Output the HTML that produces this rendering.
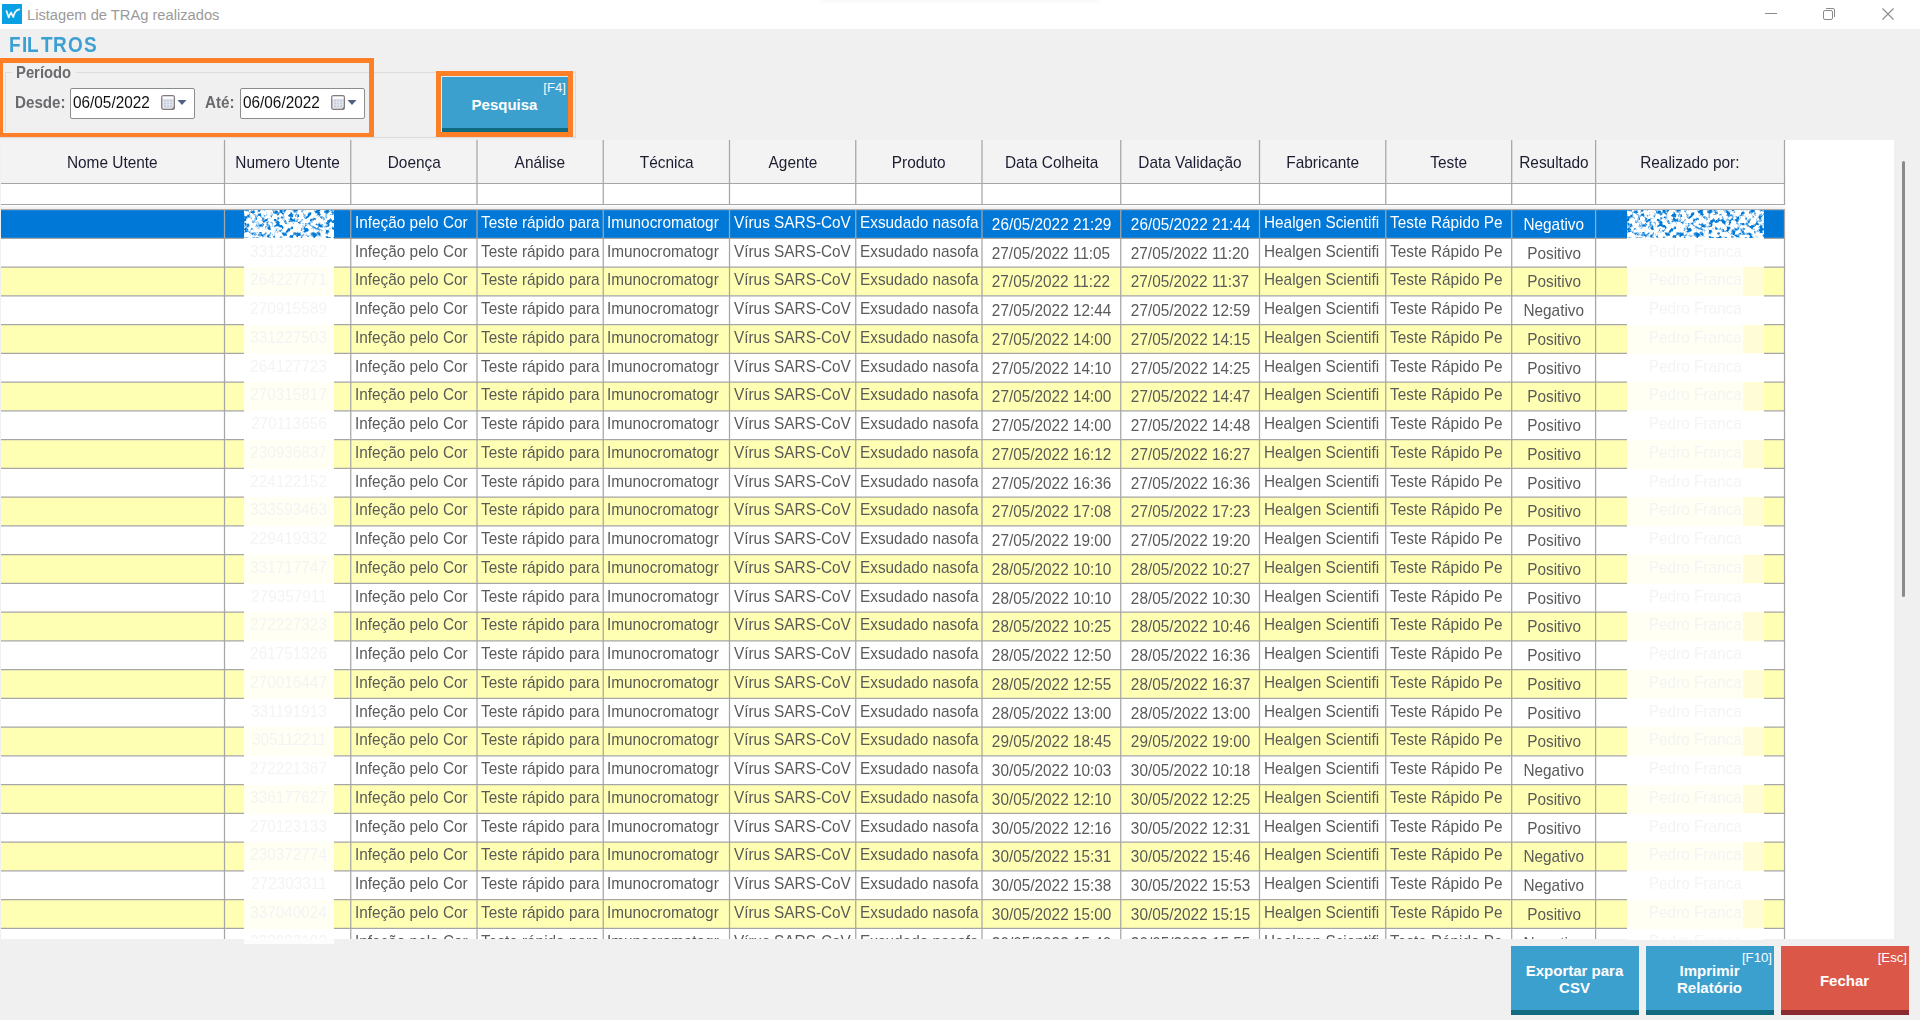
<!DOCTYPE html><html><head><meta charset="utf-8"><title>Listagem de TRAg realizados</title><style>
*{box-sizing:border-box;margin:0;padding:0}
html,body{width:1920px;height:1020px;overflow:hidden;background:#f0f0f0;font-family:"Liberation Sans", sans-serif;}
.a{position:absolute}
.t{position:absolute;white-space:pre;line-height:20px;height:20px}
.vl{position:absolute;width:1px;background:#a0a0a0}
.hl{position:absolute;height:1px;background:#a0a0a0}
.sl{display:inline-block;transform-origin:0 50%}
.sc{display:inline-block;transform-origin:50% 50%}
</style></head><body><div class="a" style="left:0;top:0;width:1920px;height:29px;background:#fff"></div><div class="a" style="left:2px;top:4px;width:20px;height:20px;background:#09a0e4"></div><svg class="a" style="left:2px;top:4px" width="20" height="20" viewBox="0 0 20 20"><path d="M4.5 7 Q5.6 10.5 6.8 13.4 Q7.9 10.2 9.1 8.4 Q10.1 11 11.3 13 Q12.6 6.2 17.3 5.4" fill="none" stroke="#f2f8fc" stroke-width="1.7" stroke-linejoin="round" stroke-linecap="round"/></svg><div class="t" style="left:27px;top:5px;font-size:14.7px;color:#9a9a9a">Listagem de TRAg realizados</div><div class="a" style="left:820px;top:-6px;width:280px;height:6px;box-shadow:0 0 6px rgba(0,0,0,0.06)"></div><div class="a" style="left:1765px;top:13px;width:12px;height:1px;background:#8a8a8a"></div><svg class="a" style="left:1820px;top:5px" width="18" height="18" viewBox="0 0 18 18"><rect x="3.5" y="5.5" width="9" height="9" rx="1.5" fill="none" stroke="#8a8a8a" stroke-width="1"/><path d="M6 3.5 H13 A1.5 1.5 0 0 1 14.5 5 V12" fill="none" stroke="#8a8a8a" stroke-width="1"/></svg><svg class="a" style="left:1879px;top:5px" width="18" height="18" viewBox="0 0 18 18"><path d="M3.5 3.5 L14.5 14.5 M14.5 3.5 L3.5 14.5" stroke="#8a8a8a" stroke-width="1.1"/></svg><div class="t" style="left:8.9px;top:31.5px;font-size:21.6px;font-weight:bold;color:#3da0d2;line-height:26px;height:26px"><span class="sl" style="transform:scaleX(0.88)">F</span></div><div class="t" style="left:21.6px;top:31.5px;font-size:21.6px;font-weight:bold;color:#3da0d2;line-height:26px;height:26px"><span class="sl" style="transform:scaleX(0.88)">I</span></div><div class="t" style="left:27.2px;top:31.5px;font-size:21.6px;font-weight:bold;color:#3da0d2;line-height:26px;height:26px"><span class="sl" style="transform:scaleX(0.88)">L</span></div><div class="t" style="left:40.9px;top:31.5px;font-size:21.6px;font-weight:bold;color:#3da0d2;line-height:26px;height:26px"><span class="sl" style="transform:scaleX(0.88)">T</span></div><div class="t" style="left:53.0px;top:31.5px;font-size:21.6px;font-weight:bold;color:#3da0d2;line-height:26px;height:26px"><span class="sl" style="transform:scaleX(0.88)">R</span></div><div class="t" style="left:67.7px;top:31.5px;font-size:21.6px;font-weight:bold;color:#3da0d2;line-height:26px;height:26px"><span class="sl" style="transform:scaleX(0.88)">O</span></div><div class="t" style="left:84.1px;top:31.5px;font-size:21.6px;font-weight:bold;color:#3da0d2;line-height:26px;height:26px"><span class="sl" style="transform:scaleX(0.88)">S</span></div><div class="a" style="left:6px;top:72px;width:570px;height:1px;background:#dcdcdc"></div><div class="a" style="left:0;top:137px;width:576px;height:1px;background:#dcdcdc"></div><div class="a" style="left:5px;top:72px;width:1px;height:60px;background:#dcdcdc"></div><div class="a" style="left:575px;top:72px;width:1px;height:65px;background:#dcdcdc"></div><div class="a" style="left:12px;top:64px;width:64px;height:16px;background:#f0f0f0"></div><div class="t" style="left:16px;top:61.5px;font-size:16.2px;font-weight:bold;color:#6a6a6e"><span class="sl" style="transform:scaleX(0.915)">Período</span></div><div class="t" style="left:15px;top:92px;font-size:16.4px;font-weight:bold;color:#6a6a6e"><span class="sl" style="transform:scaleX(0.925)">Desde:</span></div><div class="t" style="left:205px;top:92px;font-size:16.4px;font-weight:bold;color:#6a6a6e"><span class="sl" style="transform:scaleX(0.925)">Até:</span></div><div class="a" style="left:70px;top:88px;width:125px;height:31px;background:#fff;border:1px solid #8c8c8c;border-radius:2px"></div><div class="t" style="left:73px;top:93px;font-size:16.6px;color:#111"><span class="sl" style="transform:scaleX(0.925)">06/05/2022</span></div><svg class="a" style="left:161px;top:95px" width="28" height="16" viewBox="0 0 28 16"><rect x="0.75" y="0.75" width="12.6" height="13.6" rx="1.6" fill="#e4e8f1" stroke="#857a7a" stroke-width="1.3"/><rect x="1.5" y="1.5" width="11" height="2.3" fill="#fbfcfe"/><rect x="3" y="4.6" width="8.2" height="7.8" fill="#c6ccd9"/><path d="M3 7.2 H11.2 M3 9.8 H11.2 M5.7 4.6 V12.4 M8.4 4.6 V12.4" stroke="#e8ebf2" stroke-width="0.9"/><path d="M10.2 14.4 L13.4 11.2 V13 Q13.4 14.4 12 14.4 Z" fill="#857a7a"/><path d="M16.5 5 L25.5 5 L21 10 Z" fill="#4d6186"/></svg><div class="a" style="left:240px;top:88px;width:125px;height:31px;background:#fff;border:1px solid #8c8c8c;border-radius:2px"></div><div class="t" style="left:243px;top:93px;font-size:16.6px;color:#111"><span class="sl" style="transform:scaleX(0.925)">06/06/2022</span></div><svg class="a" style="left:331px;top:95px" width="28" height="16" viewBox="0 0 28 16"><rect x="0.75" y="0.75" width="12.6" height="13.6" rx="1.6" fill="#e4e8f1" stroke="#857a7a" stroke-width="1.3"/><rect x="1.5" y="1.5" width="11" height="2.3" fill="#fbfcfe"/><rect x="3" y="4.6" width="8.2" height="7.8" fill="#c6ccd9"/><path d="M3 7.2 H11.2 M3 9.8 H11.2 M5.7 4.6 V12.4 M8.4 4.6 V12.4" stroke="#e8ebf2" stroke-width="0.9"/><path d="M10.2 14.4 L13.4 11.2 V13 Q13.4 14.4 12 14.4 Z" fill="#857a7a"/><path d="M16.5 5 L25.5 5 L21 10 Z" fill="#4d6186"/></svg><div class="a" style="left:0;top:58px;width:374px;height:79px;border:5px solid #ff7f27;border-left-width:3px;border-bottom-width:4.5px"></div><div class="a" style="left:441px;top:76px;width:127px;height:56px;background:#3ca0cf;border-left:1px solid #e6f3fa;border-top:1px solid #d8edf7"></div><div class="a" style="left:442px;top:128px;width:126px;height:4px;background:#106b80"></div><div class="t" style="left:441px;width:127px;text-align:center;top:95px;font-size:15px;font-weight:bold;color:#fff">Pesquisa</div><div class="t" style="left:515px;width:51px;text-align:right;top:78px;font-size:13.2px;color:#f4f8fb">[F4]</div><div class="a" style="left:436px;top:71px;width:137px;height:66px;border:5px solid #ff7f27"></div><div class="a" style="left:1px;top:140px;width:1893px;height:799px;background:#fff;overflow:hidden"><svg class="a" style="left:-1px;top:-140px" width="1900" height="939" viewBox="0 0 1900 939"><rect x="1" y="140" width="1783.5" height="43.3" fill="#f3f3f3"/><defs><linearGradient id="gg" x1="0" y1="0" x2="0" y2="1"><stop offset="0" stop-color="#ffffff"/><stop offset="1" stop-color="#ececec"/></linearGradient></defs><rect x="1" y="204.9" width="1783.5" height="4.6" fill="url(#gg)"/><rect x="1" y="209.5" width="1783.5" height="28.75" fill="#0078d7"/><rect x="1" y="238.25" width="1783.5" height="28.75" fill="#ffffff"/><rect x="1" y="267.0" width="1783.5" height="28.75" fill="#ffffb4"/><rect x="1" y="295.75" width="1783.5" height="28.75" fill="#ffffff"/><rect x="1" y="324.5" width="1783.5" height="28.75" fill="#ffffb4"/><rect x="1" y="353.25" width="1783.5" height="28.75" fill="#ffffff"/><rect x="1" y="382.0" width="1783.5" height="28.75" fill="#ffffb4"/><rect x="1" y="410.75" width="1783.5" height="28.75" fill="#ffffff"/><rect x="1" y="439.5" width="1783.5" height="28.75" fill="#ffffb4"/><rect x="1" y="468.25" width="1783.5" height="28.75" fill="#ffffff"/><rect x="1" y="497.0" width="1783.5" height="28.75" fill="#ffffb4"/><rect x="1" y="525.75" width="1783.5" height="28.75" fill="#ffffff"/><rect x="1" y="554.5" width="1783.5" height="28.75" fill="#ffffb4"/><rect x="1" y="583.25" width="1783.5" height="28.75" fill="#ffffff"/><rect x="1" y="612.0" width="1783.5" height="28.75" fill="#ffffb4"/><rect x="1" y="640.75" width="1783.5" height="28.75" fill="#ffffff"/><rect x="1" y="669.5" width="1783.5" height="28.75" fill="#ffffb4"/><rect x="1" y="698.25" width="1783.5" height="28.75" fill="#ffffff"/><rect x="1" y="727.0" width="1783.5" height="28.75" fill="#ffffb4"/><rect x="1" y="755.75" width="1783.5" height="28.75" fill="#ffffff"/><rect x="1" y="784.5" width="1783.5" height="28.75" fill="#ffffb4"/><rect x="1" y="813.25" width="1783.5" height="28.75" fill="#ffffff"/><rect x="1" y="842.0" width="1783.5" height="28.75" fill="#ffffb4"/><rect x="1" y="870.75" width="1783.5" height="28.75" fill="#ffffff"/><rect x="1" y="899.5" width="1783.5" height="28.75" fill="#ffffb4"/><rect x="1" y="928.25" width="1783.5" height="28.75" fill="#ffffff"/><line x1="1" x2="1785.1" y1="183.5" y2="183.5" stroke="#a6a6a6" stroke-width="1.2"/><line x1="1" x2="1785.1" y1="204.5" y2="204.5" stroke="#a6a6a6" stroke-width="1.2"/><line x1="1" x2="1785.1" y1="209.7" y2="209.7" stroke="#b9aea6" stroke-width="1"/><line x1="1" x2="1785.1" y1="238.4" y2="238.4" stroke="#a6a6a6" stroke-width="1.25"/><line x1="1" x2="1785.1" y1="267.15" y2="267.15" stroke="#a6a6a6" stroke-width="1.25"/><line x1="1" x2="1785.1" y1="295.9" y2="295.9" stroke="#a6a6a6" stroke-width="1.25"/><line x1="1" x2="1785.1" y1="324.65" y2="324.65" stroke="#a6a6a6" stroke-width="1.25"/><line x1="1" x2="1785.1" y1="353.4" y2="353.4" stroke="#a6a6a6" stroke-width="1.25"/><line x1="1" x2="1785.1" y1="382.15" y2="382.15" stroke="#a6a6a6" stroke-width="1.25"/><line x1="1" x2="1785.1" y1="410.9" y2="410.9" stroke="#a6a6a6" stroke-width="1.25"/><line x1="1" x2="1785.1" y1="439.65" y2="439.65" stroke="#a6a6a6" stroke-width="1.25"/><line x1="1" x2="1785.1" y1="468.4" y2="468.4" stroke="#a6a6a6" stroke-width="1.25"/><line x1="1" x2="1785.1" y1="497.15" y2="497.15" stroke="#a6a6a6" stroke-width="1.25"/><line x1="1" x2="1785.1" y1="525.9" y2="525.9" stroke="#a6a6a6" stroke-width="1.25"/><line x1="1" x2="1785.1" y1="554.65" y2="554.65" stroke="#a6a6a6" stroke-width="1.25"/><line x1="1" x2="1785.1" y1="583.4" y2="583.4" stroke="#a6a6a6" stroke-width="1.25"/><line x1="1" x2="1785.1" y1="612.15" y2="612.15" stroke="#a6a6a6" stroke-width="1.25"/><line x1="1" x2="1785.1" y1="640.9" y2="640.9" stroke="#a6a6a6" stroke-width="1.25"/><line x1="1" x2="1785.1" y1="669.65" y2="669.65" stroke="#a6a6a6" stroke-width="1.25"/><line x1="1" x2="1785.1" y1="698.4" y2="698.4" stroke="#a6a6a6" stroke-width="1.25"/><line x1="1" x2="1785.1" y1="727.15" y2="727.15" stroke="#a6a6a6" stroke-width="1.25"/><line x1="1" x2="1785.1" y1="755.9" y2="755.9" stroke="#a6a6a6" stroke-width="1.25"/><line x1="1" x2="1785.1" y1="784.65" y2="784.65" stroke="#a6a6a6" stroke-width="1.25"/><line x1="1" x2="1785.1" y1="813.4" y2="813.4" stroke="#a6a6a6" stroke-width="1.25"/><line x1="1" x2="1785.1" y1="842.15" y2="842.15" stroke="#a6a6a6" stroke-width="1.25"/><line x1="1" x2="1785.1" y1="870.9" y2="870.9" stroke="#a6a6a6" stroke-width="1.25"/><line x1="1" x2="1785.1" y1="899.65" y2="899.65" stroke="#a6a6a6" stroke-width="1.25"/><line x1="1" x2="1785.1" y1="928.4" y2="928.4" stroke="#a6a6a6" stroke-width="1.25"/><line x1="1" x2="1785.1" y1="957.15" y2="957.15" stroke="#a6a6a6" stroke-width="1.25"/><line x1="224.5" x2="224.5" y1="140" y2="204.8" stroke="#a6a6a6" stroke-width="1.25"/><line x1="224.5" x2="224.5" y1="209.6" y2="939" stroke="#a6a6a6" stroke-width="1.25"/><line x1="350.75" x2="350.75" y1="140" y2="204.8" stroke="#a6a6a6" stroke-width="1.25"/><line x1="350.75" x2="350.75" y1="209.6" y2="939" stroke="#a6a6a6" stroke-width="1.25"/><line x1="477" x2="477" y1="140" y2="204.8" stroke="#a6a6a6" stroke-width="1.25"/><line x1="477" x2="477" y1="209.6" y2="939" stroke="#a6a6a6" stroke-width="1.25"/><line x1="603.25" x2="603.25" y1="140" y2="204.8" stroke="#a6a6a6" stroke-width="1.25"/><line x1="603.25" x2="603.25" y1="209.6" y2="939" stroke="#a6a6a6" stroke-width="1.25"/><line x1="729.5" x2="729.5" y1="140" y2="204.8" stroke="#a6a6a6" stroke-width="1.25"/><line x1="729.5" x2="729.5" y1="209.6" y2="939" stroke="#a6a6a6" stroke-width="1.25"/><line x1="855.75" x2="855.75" y1="140" y2="204.8" stroke="#a6a6a6" stroke-width="1.25"/><line x1="855.75" x2="855.75" y1="209.6" y2="939" stroke="#a6a6a6" stroke-width="1.25"/><line x1="982" x2="982" y1="140" y2="204.8" stroke="#a6a6a6" stroke-width="1.25"/><line x1="982" x2="982" y1="209.6" y2="939" stroke="#a6a6a6" stroke-width="1.25"/><line x1="1120.75" x2="1120.75" y1="140" y2="204.8" stroke="#a6a6a6" stroke-width="1.25"/><line x1="1120.75" x2="1120.75" y1="209.6" y2="939" stroke="#a6a6a6" stroke-width="1.25"/><line x1="1259.5" x2="1259.5" y1="140" y2="204.8" stroke="#a6a6a6" stroke-width="1.25"/><line x1="1259.5" x2="1259.5" y1="209.6" y2="939" stroke="#a6a6a6" stroke-width="1.25"/><line x1="1385.75" x2="1385.75" y1="140" y2="204.8" stroke="#a6a6a6" stroke-width="1.25"/><line x1="1385.75" x2="1385.75" y1="209.6" y2="939" stroke="#a6a6a6" stroke-width="1.25"/><line x1="1511.7" x2="1511.7" y1="140" y2="204.8" stroke="#a6a6a6" stroke-width="1.25"/><line x1="1511.7" x2="1511.7" y1="209.6" y2="939" stroke="#a6a6a6" stroke-width="1.25"/><line x1="1595.6" x2="1595.6" y1="140" y2="204.8" stroke="#a6a6a6" stroke-width="1.25"/><line x1="1595.6" x2="1595.6" y1="209.6" y2="939" stroke="#a6a6a6" stroke-width="1.25"/><line x1="1784.5" x2="1784.5" y1="140" y2="204.8" stroke="#a6a6a6" stroke-width="1.25"/><line x1="1784.5" x2="1784.5" y1="209.6" y2="939" stroke="#a6a6a6" stroke-width="1.25"/></svg><div class="t" style="left:0px;width:223.5px;text-align:center;top:12px;font-size:16.4px;color:#1c1c30"><span class="sc" style="transform:scaleX(0.94)">Nome Utente</span></div><div class="t" style="left:223.5px;width:126.25px;text-align:center;top:12px;font-size:16.4px;color:#1c1c30"><span class="sc" style="transform:scaleX(0.94)">Numero Utente</span></div><div class="t" style="left:349.75px;width:126.25px;text-align:center;top:12px;font-size:16.4px;color:#1c1c30"><span class="sc" style="transform:scaleX(0.94)">Doença</span></div><div class="t" style="left:476px;width:126.25px;text-align:center;top:12px;font-size:16.4px;color:#1c1c30"><span class="sc" style="transform:scaleX(0.94)">Análise</span></div><div class="t" style="left:602.25px;width:126.25px;text-align:center;top:12px;font-size:16.4px;color:#1c1c30"><span class="sc" style="transform:scaleX(0.94)">Técnica</span></div><div class="t" style="left:728.5px;width:126.25px;text-align:center;top:12px;font-size:16.4px;color:#1c1c30"><span class="sc" style="transform:scaleX(0.94)">Agente</span></div><div class="t" style="left:854.75px;width:126.25px;text-align:center;top:12px;font-size:16.4px;color:#1c1c30"><span class="sc" style="transform:scaleX(0.94)">Produto</span></div><div class="t" style="left:981px;width:138.75px;text-align:center;top:12px;font-size:16.4px;color:#1c1c30"><span class="sc" style="transform:scaleX(0.94)">Data Colheita</span></div><div class="t" style="left:1119.75px;width:138.75px;text-align:center;top:12px;font-size:16.4px;color:#1c1c30"><span class="sc" style="transform:scaleX(0.94)">Data Validação</span></div><div class="t" style="left:1258.5px;width:126.25px;text-align:center;top:12px;font-size:16.4px;color:#1c1c30"><span class="sc" style="transform:scaleX(0.94)">Fabricante</span></div><div class="t" style="left:1384.75px;width:125.95000000000005px;text-align:center;top:12px;font-size:16.4px;color:#1c1c30"><span class="sc" style="transform:scaleX(0.94)">Teste</span></div><div class="t" style="left:1510.7px;width:83.89999999999986px;text-align:center;top:12px;font-size:16.4px;color:#1c1c30"><span class="sc" style="transform:scaleX(0.94)">Resultado</span></div><div class="t" style="left:1594.6px;width:188.9000000000001px;text-align:center;top:12px;font-size:16.4px;color:#1c1c30"><span class="sc" style="transform:scaleX(0.94)">Realizado por:</span></div><div class="t" style="left:353.75px;top:72.75px;font-size:16.6px;color:#fff"><span class="sl" style="transform:scaleX(0.925)">Infeção pelo Cor</span></div><div class="t" style="left:480px;top:72.75px;font-size:16.6px;color:#fff"><span class="sl" style="transform:scaleX(0.925)">Teste rápido para</span></div><div class="t" style="left:606.25px;top:72.75px;font-size:16.6px;color:#fff"><span class="sl" style="transform:scaleX(0.925)">Imunocromatogr</span></div><div class="t" style="left:732.5px;top:72.75px;font-size:16.6px;color:#fff"><span class="sl" style="transform:scaleX(0.925)">Vírus SARS-CoV</span></div><div class="t" style="left:858.75px;top:72.75px;font-size:16.6px;color:#fff"><span class="sl" style="transform:scaleX(0.925)">Exsudado nasofa</span></div><div class="t" style="left:1262.5px;top:72.75px;font-size:16.6px;color:#fff"><span class="sl" style="transform:scaleX(0.925)">Healgen Scientifi</span></div><div class="t" style="left:1388.75px;top:72.75px;font-size:16.6px;color:#fff"><span class="sl" style="transform:scaleX(0.925)">Teste Rápido Pe</span></div><div class="t" style="left:981px;width:138.75px;text-align:center;top:74.75px;font-size:16.6px;color:#fff"><span class="sc" style="transform:scaleX(0.925)">26/05/2022 21:29</span></div><div class="t" style="left:1119.75px;width:138.75px;text-align:center;top:74.75px;font-size:16.6px;color:#fff"><span class="sc" style="transform:scaleX(0.925)">26/05/2022 21:44</span></div><div class="t" style="left:1510.7px;width:83.89999999999986px;text-align:center;top:74.75px;font-size:16.6px;color:#fff"><span class="sc" style="transform:scaleX(0.925)">Negativo</span></div><div class="t" style="left:353.75px;top:101.5px;font-size:16.6px;color:#5a5a5a"><span class="sl" style="transform:scaleX(0.925)">Infeção pelo Cor</span></div><div class="t" style="left:480px;top:101.5px;font-size:16.6px;color:#5a5a5a"><span class="sl" style="transform:scaleX(0.925)">Teste rápido para</span></div><div class="t" style="left:606.25px;top:101.5px;font-size:16.6px;color:#5a5a5a"><span class="sl" style="transform:scaleX(0.925)">Imunocromatogr</span></div><div class="t" style="left:732.5px;top:101.5px;font-size:16.6px;color:#5a5a5a"><span class="sl" style="transform:scaleX(0.925)">Vírus SARS-CoV</span></div><div class="t" style="left:858.75px;top:101.5px;font-size:16.6px;color:#5a5a5a"><span class="sl" style="transform:scaleX(0.925)">Exsudado nasofa</span></div><div class="t" style="left:1262.5px;top:101.5px;font-size:16.6px;color:#5a5a5a"><span class="sl" style="transform:scaleX(0.925)">Healgen Scientifi</span></div><div class="t" style="left:1388.75px;top:101.5px;font-size:16.6px;color:#5a5a5a"><span class="sl" style="transform:scaleX(0.925)">Teste Rápido Pe</span></div><div class="t" style="left:981px;width:138.75px;text-align:center;top:103.5px;font-size:16.6px;color:#5a5a5a"><span class="sc" style="transform:scaleX(0.925)">27/05/2022 11:05</span></div><div class="t" style="left:1119.75px;width:138.75px;text-align:center;top:103.5px;font-size:16.6px;color:#5a5a5a"><span class="sc" style="transform:scaleX(0.925)">27/05/2022 11:20</span></div><div class="t" style="left:1510.7px;width:83.89999999999986px;text-align:center;top:103.5px;font-size:16.6px;color:#5a5a5a"><span class="sc" style="transform:scaleX(0.925)">Positivo</span></div><div class="t" style="left:353.75px;top:130.25px;font-size:16.6px;color:#5a5a5a"><span class="sl" style="transform:scaleX(0.925)">Infeção pelo Cor</span></div><div class="t" style="left:480px;top:130.25px;font-size:16.6px;color:#5a5a5a"><span class="sl" style="transform:scaleX(0.925)">Teste rápido para</span></div><div class="t" style="left:606.25px;top:130.25px;font-size:16.6px;color:#5a5a5a"><span class="sl" style="transform:scaleX(0.925)">Imunocromatogr</span></div><div class="t" style="left:732.5px;top:130.25px;font-size:16.6px;color:#5a5a5a"><span class="sl" style="transform:scaleX(0.925)">Vírus SARS-CoV</span></div><div class="t" style="left:858.75px;top:130.25px;font-size:16.6px;color:#5a5a5a"><span class="sl" style="transform:scaleX(0.925)">Exsudado nasofa</span></div><div class="t" style="left:1262.5px;top:130.25px;font-size:16.6px;color:#5a5a5a"><span class="sl" style="transform:scaleX(0.925)">Healgen Scientifi</span></div><div class="t" style="left:1388.75px;top:130.25px;font-size:16.6px;color:#5a5a5a"><span class="sl" style="transform:scaleX(0.925)">Teste Rápido Pe</span></div><div class="t" style="left:981px;width:138.75px;text-align:center;top:132.25px;font-size:16.6px;color:#5a5a5a"><span class="sc" style="transform:scaleX(0.925)">27/05/2022 11:22</span></div><div class="t" style="left:1119.75px;width:138.75px;text-align:center;top:132.25px;font-size:16.6px;color:#5a5a5a"><span class="sc" style="transform:scaleX(0.925)">27/05/2022 11:37</span></div><div class="t" style="left:1510.7px;width:83.89999999999986px;text-align:center;top:132.25px;font-size:16.6px;color:#5a5a5a"><span class="sc" style="transform:scaleX(0.925)">Positivo</span></div><div class="t" style="left:353.75px;top:159.0px;font-size:16.6px;color:#5a5a5a"><span class="sl" style="transform:scaleX(0.925)">Infeção pelo Cor</span></div><div class="t" style="left:480px;top:159.0px;font-size:16.6px;color:#5a5a5a"><span class="sl" style="transform:scaleX(0.925)">Teste rápido para</span></div><div class="t" style="left:606.25px;top:159.0px;font-size:16.6px;color:#5a5a5a"><span class="sl" style="transform:scaleX(0.925)">Imunocromatogr</span></div><div class="t" style="left:732.5px;top:159.0px;font-size:16.6px;color:#5a5a5a"><span class="sl" style="transform:scaleX(0.925)">Vírus SARS-CoV</span></div><div class="t" style="left:858.75px;top:159.0px;font-size:16.6px;color:#5a5a5a"><span class="sl" style="transform:scaleX(0.925)">Exsudado nasofa</span></div><div class="t" style="left:1262.5px;top:159.0px;font-size:16.6px;color:#5a5a5a"><span class="sl" style="transform:scaleX(0.925)">Healgen Scientifi</span></div><div class="t" style="left:1388.75px;top:159.0px;font-size:16.6px;color:#5a5a5a"><span class="sl" style="transform:scaleX(0.925)">Teste Rápido Pe</span></div><div class="t" style="left:981px;width:138.75px;text-align:center;top:161.0px;font-size:16.6px;color:#5a5a5a"><span class="sc" style="transform:scaleX(0.925)">27/05/2022 12:44</span></div><div class="t" style="left:1119.75px;width:138.75px;text-align:center;top:161.0px;font-size:16.6px;color:#5a5a5a"><span class="sc" style="transform:scaleX(0.925)">27/05/2022 12:59</span></div><div class="t" style="left:1510.7px;width:83.89999999999986px;text-align:center;top:161.0px;font-size:16.6px;color:#5a5a5a"><span class="sc" style="transform:scaleX(0.925)">Negativo</span></div><div class="t" style="left:353.75px;top:187.75px;font-size:16.6px;color:#5a5a5a"><span class="sl" style="transform:scaleX(0.925)">Infeção pelo Cor</span></div><div class="t" style="left:480px;top:187.75px;font-size:16.6px;color:#5a5a5a"><span class="sl" style="transform:scaleX(0.925)">Teste rápido para</span></div><div class="t" style="left:606.25px;top:187.75px;font-size:16.6px;color:#5a5a5a"><span class="sl" style="transform:scaleX(0.925)">Imunocromatogr</span></div><div class="t" style="left:732.5px;top:187.75px;font-size:16.6px;color:#5a5a5a"><span class="sl" style="transform:scaleX(0.925)">Vírus SARS-CoV</span></div><div class="t" style="left:858.75px;top:187.75px;font-size:16.6px;color:#5a5a5a"><span class="sl" style="transform:scaleX(0.925)">Exsudado nasofa</span></div><div class="t" style="left:1262.5px;top:187.75px;font-size:16.6px;color:#5a5a5a"><span class="sl" style="transform:scaleX(0.925)">Healgen Scientifi</span></div><div class="t" style="left:1388.75px;top:187.75px;font-size:16.6px;color:#5a5a5a"><span class="sl" style="transform:scaleX(0.925)">Teste Rápido Pe</span></div><div class="t" style="left:981px;width:138.75px;text-align:center;top:189.75px;font-size:16.6px;color:#5a5a5a"><span class="sc" style="transform:scaleX(0.925)">27/05/2022 14:00</span></div><div class="t" style="left:1119.75px;width:138.75px;text-align:center;top:189.75px;font-size:16.6px;color:#5a5a5a"><span class="sc" style="transform:scaleX(0.925)">27/05/2022 14:15</span></div><div class="t" style="left:1510.7px;width:83.89999999999986px;text-align:center;top:189.75px;font-size:16.6px;color:#5a5a5a"><span class="sc" style="transform:scaleX(0.925)">Positivo</span></div><div class="t" style="left:353.75px;top:216.5px;font-size:16.6px;color:#5a5a5a"><span class="sl" style="transform:scaleX(0.925)">Infeção pelo Cor</span></div><div class="t" style="left:480px;top:216.5px;font-size:16.6px;color:#5a5a5a"><span class="sl" style="transform:scaleX(0.925)">Teste rápido para</span></div><div class="t" style="left:606.25px;top:216.5px;font-size:16.6px;color:#5a5a5a"><span class="sl" style="transform:scaleX(0.925)">Imunocromatogr</span></div><div class="t" style="left:732.5px;top:216.5px;font-size:16.6px;color:#5a5a5a"><span class="sl" style="transform:scaleX(0.925)">Vírus SARS-CoV</span></div><div class="t" style="left:858.75px;top:216.5px;font-size:16.6px;color:#5a5a5a"><span class="sl" style="transform:scaleX(0.925)">Exsudado nasofa</span></div><div class="t" style="left:1262.5px;top:216.5px;font-size:16.6px;color:#5a5a5a"><span class="sl" style="transform:scaleX(0.925)">Healgen Scientifi</span></div><div class="t" style="left:1388.75px;top:216.5px;font-size:16.6px;color:#5a5a5a"><span class="sl" style="transform:scaleX(0.925)">Teste Rápido Pe</span></div><div class="t" style="left:981px;width:138.75px;text-align:center;top:218.5px;font-size:16.6px;color:#5a5a5a"><span class="sc" style="transform:scaleX(0.925)">27/05/2022 14:10</span></div><div class="t" style="left:1119.75px;width:138.75px;text-align:center;top:218.5px;font-size:16.6px;color:#5a5a5a"><span class="sc" style="transform:scaleX(0.925)">27/05/2022 14:25</span></div><div class="t" style="left:1510.7px;width:83.89999999999986px;text-align:center;top:218.5px;font-size:16.6px;color:#5a5a5a"><span class="sc" style="transform:scaleX(0.925)">Positivo</span></div><div class="t" style="left:353.75px;top:245.25px;font-size:16.6px;color:#5a5a5a"><span class="sl" style="transform:scaleX(0.925)">Infeção pelo Cor</span></div><div class="t" style="left:480px;top:245.25px;font-size:16.6px;color:#5a5a5a"><span class="sl" style="transform:scaleX(0.925)">Teste rápido para</span></div><div class="t" style="left:606.25px;top:245.25px;font-size:16.6px;color:#5a5a5a"><span class="sl" style="transform:scaleX(0.925)">Imunocromatogr</span></div><div class="t" style="left:732.5px;top:245.25px;font-size:16.6px;color:#5a5a5a"><span class="sl" style="transform:scaleX(0.925)">Vírus SARS-CoV</span></div><div class="t" style="left:858.75px;top:245.25px;font-size:16.6px;color:#5a5a5a"><span class="sl" style="transform:scaleX(0.925)">Exsudado nasofa</span></div><div class="t" style="left:1262.5px;top:245.25px;font-size:16.6px;color:#5a5a5a"><span class="sl" style="transform:scaleX(0.925)">Healgen Scientifi</span></div><div class="t" style="left:1388.75px;top:245.25px;font-size:16.6px;color:#5a5a5a"><span class="sl" style="transform:scaleX(0.925)">Teste Rápido Pe</span></div><div class="t" style="left:981px;width:138.75px;text-align:center;top:247.25px;font-size:16.6px;color:#5a5a5a"><span class="sc" style="transform:scaleX(0.925)">27/05/2022 14:00</span></div><div class="t" style="left:1119.75px;width:138.75px;text-align:center;top:247.25px;font-size:16.6px;color:#5a5a5a"><span class="sc" style="transform:scaleX(0.925)">27/05/2022 14:47</span></div><div class="t" style="left:1510.7px;width:83.89999999999986px;text-align:center;top:247.25px;font-size:16.6px;color:#5a5a5a"><span class="sc" style="transform:scaleX(0.925)">Positivo</span></div><div class="t" style="left:353.75px;top:274.0px;font-size:16.6px;color:#5a5a5a"><span class="sl" style="transform:scaleX(0.925)">Infeção pelo Cor</span></div><div class="t" style="left:480px;top:274.0px;font-size:16.6px;color:#5a5a5a"><span class="sl" style="transform:scaleX(0.925)">Teste rápido para</span></div><div class="t" style="left:606.25px;top:274.0px;font-size:16.6px;color:#5a5a5a"><span class="sl" style="transform:scaleX(0.925)">Imunocromatogr</span></div><div class="t" style="left:732.5px;top:274.0px;font-size:16.6px;color:#5a5a5a"><span class="sl" style="transform:scaleX(0.925)">Vírus SARS-CoV</span></div><div class="t" style="left:858.75px;top:274.0px;font-size:16.6px;color:#5a5a5a"><span class="sl" style="transform:scaleX(0.925)">Exsudado nasofa</span></div><div class="t" style="left:1262.5px;top:274.0px;font-size:16.6px;color:#5a5a5a"><span class="sl" style="transform:scaleX(0.925)">Healgen Scientifi</span></div><div class="t" style="left:1388.75px;top:274.0px;font-size:16.6px;color:#5a5a5a"><span class="sl" style="transform:scaleX(0.925)">Teste Rápido Pe</span></div><div class="t" style="left:981px;width:138.75px;text-align:center;top:276.0px;font-size:16.6px;color:#5a5a5a"><span class="sc" style="transform:scaleX(0.925)">27/05/2022 14:00</span></div><div class="t" style="left:1119.75px;width:138.75px;text-align:center;top:276.0px;font-size:16.6px;color:#5a5a5a"><span class="sc" style="transform:scaleX(0.925)">27/05/2022 14:48</span></div><div class="t" style="left:1510.7px;width:83.89999999999986px;text-align:center;top:276.0px;font-size:16.6px;color:#5a5a5a"><span class="sc" style="transform:scaleX(0.925)">Positivo</span></div><div class="t" style="left:353.75px;top:302.75px;font-size:16.6px;color:#5a5a5a"><span class="sl" style="transform:scaleX(0.925)">Infeção pelo Cor</span></div><div class="t" style="left:480px;top:302.75px;font-size:16.6px;color:#5a5a5a"><span class="sl" style="transform:scaleX(0.925)">Teste rápido para</span></div><div class="t" style="left:606.25px;top:302.75px;font-size:16.6px;color:#5a5a5a"><span class="sl" style="transform:scaleX(0.925)">Imunocromatogr</span></div><div class="t" style="left:732.5px;top:302.75px;font-size:16.6px;color:#5a5a5a"><span class="sl" style="transform:scaleX(0.925)">Vírus SARS-CoV</span></div><div class="t" style="left:858.75px;top:302.75px;font-size:16.6px;color:#5a5a5a"><span class="sl" style="transform:scaleX(0.925)">Exsudado nasofa</span></div><div class="t" style="left:1262.5px;top:302.75px;font-size:16.6px;color:#5a5a5a"><span class="sl" style="transform:scaleX(0.925)">Healgen Scientifi</span></div><div class="t" style="left:1388.75px;top:302.75px;font-size:16.6px;color:#5a5a5a"><span class="sl" style="transform:scaleX(0.925)">Teste Rápido Pe</span></div><div class="t" style="left:981px;width:138.75px;text-align:center;top:304.75px;font-size:16.6px;color:#5a5a5a"><span class="sc" style="transform:scaleX(0.925)">27/05/2022 16:12</span></div><div class="t" style="left:1119.75px;width:138.75px;text-align:center;top:304.75px;font-size:16.6px;color:#5a5a5a"><span class="sc" style="transform:scaleX(0.925)">27/05/2022 16:27</span></div><div class="t" style="left:1510.7px;width:83.89999999999986px;text-align:center;top:304.75px;font-size:16.6px;color:#5a5a5a"><span class="sc" style="transform:scaleX(0.925)">Positivo</span></div><div class="t" style="left:353.75px;top:331.5px;font-size:16.6px;color:#5a5a5a"><span class="sl" style="transform:scaleX(0.925)">Infeção pelo Cor</span></div><div class="t" style="left:480px;top:331.5px;font-size:16.6px;color:#5a5a5a"><span class="sl" style="transform:scaleX(0.925)">Teste rápido para</span></div><div class="t" style="left:606.25px;top:331.5px;font-size:16.6px;color:#5a5a5a"><span class="sl" style="transform:scaleX(0.925)">Imunocromatogr</span></div><div class="t" style="left:732.5px;top:331.5px;font-size:16.6px;color:#5a5a5a"><span class="sl" style="transform:scaleX(0.925)">Vírus SARS-CoV</span></div><div class="t" style="left:858.75px;top:331.5px;font-size:16.6px;color:#5a5a5a"><span class="sl" style="transform:scaleX(0.925)">Exsudado nasofa</span></div><div class="t" style="left:1262.5px;top:331.5px;font-size:16.6px;color:#5a5a5a"><span class="sl" style="transform:scaleX(0.925)">Healgen Scientifi</span></div><div class="t" style="left:1388.75px;top:331.5px;font-size:16.6px;color:#5a5a5a"><span class="sl" style="transform:scaleX(0.925)">Teste Rápido Pe</span></div><div class="t" style="left:981px;width:138.75px;text-align:center;top:333.5px;font-size:16.6px;color:#5a5a5a"><span class="sc" style="transform:scaleX(0.925)">27/05/2022 16:36</span></div><div class="t" style="left:1119.75px;width:138.75px;text-align:center;top:333.5px;font-size:16.6px;color:#5a5a5a"><span class="sc" style="transform:scaleX(0.925)">27/05/2022 16:36</span></div><div class="t" style="left:1510.7px;width:83.89999999999986px;text-align:center;top:333.5px;font-size:16.6px;color:#5a5a5a"><span class="sc" style="transform:scaleX(0.925)">Positivo</span></div><div class="t" style="left:353.75px;top:360.25px;font-size:16.6px;color:#5a5a5a"><span class="sl" style="transform:scaleX(0.925)">Infeção pelo Cor</span></div><div class="t" style="left:480px;top:360.25px;font-size:16.6px;color:#5a5a5a"><span class="sl" style="transform:scaleX(0.925)">Teste rápido para</span></div><div class="t" style="left:606.25px;top:360.25px;font-size:16.6px;color:#5a5a5a"><span class="sl" style="transform:scaleX(0.925)">Imunocromatogr</span></div><div class="t" style="left:732.5px;top:360.25px;font-size:16.6px;color:#5a5a5a"><span class="sl" style="transform:scaleX(0.925)">Vírus SARS-CoV</span></div><div class="t" style="left:858.75px;top:360.25px;font-size:16.6px;color:#5a5a5a"><span class="sl" style="transform:scaleX(0.925)">Exsudado nasofa</span></div><div class="t" style="left:1262.5px;top:360.25px;font-size:16.6px;color:#5a5a5a"><span class="sl" style="transform:scaleX(0.925)">Healgen Scientifi</span></div><div class="t" style="left:1388.75px;top:360.25px;font-size:16.6px;color:#5a5a5a"><span class="sl" style="transform:scaleX(0.925)">Teste Rápido Pe</span></div><div class="t" style="left:981px;width:138.75px;text-align:center;top:362.25px;font-size:16.6px;color:#5a5a5a"><span class="sc" style="transform:scaleX(0.925)">27/05/2022 17:08</span></div><div class="t" style="left:1119.75px;width:138.75px;text-align:center;top:362.25px;font-size:16.6px;color:#5a5a5a"><span class="sc" style="transform:scaleX(0.925)">27/05/2022 17:23</span></div><div class="t" style="left:1510.7px;width:83.89999999999986px;text-align:center;top:362.25px;font-size:16.6px;color:#5a5a5a"><span class="sc" style="transform:scaleX(0.925)">Positivo</span></div><div class="t" style="left:353.75px;top:389.0px;font-size:16.6px;color:#5a5a5a"><span class="sl" style="transform:scaleX(0.925)">Infeção pelo Cor</span></div><div class="t" style="left:480px;top:389.0px;font-size:16.6px;color:#5a5a5a"><span class="sl" style="transform:scaleX(0.925)">Teste rápido para</span></div><div class="t" style="left:606.25px;top:389.0px;font-size:16.6px;color:#5a5a5a"><span class="sl" style="transform:scaleX(0.925)">Imunocromatogr</span></div><div class="t" style="left:732.5px;top:389.0px;font-size:16.6px;color:#5a5a5a"><span class="sl" style="transform:scaleX(0.925)">Vírus SARS-CoV</span></div><div class="t" style="left:858.75px;top:389.0px;font-size:16.6px;color:#5a5a5a"><span class="sl" style="transform:scaleX(0.925)">Exsudado nasofa</span></div><div class="t" style="left:1262.5px;top:389.0px;font-size:16.6px;color:#5a5a5a"><span class="sl" style="transform:scaleX(0.925)">Healgen Scientifi</span></div><div class="t" style="left:1388.75px;top:389.0px;font-size:16.6px;color:#5a5a5a"><span class="sl" style="transform:scaleX(0.925)">Teste Rápido Pe</span></div><div class="t" style="left:981px;width:138.75px;text-align:center;top:391.0px;font-size:16.6px;color:#5a5a5a"><span class="sc" style="transform:scaleX(0.925)">27/05/2022 19:00</span></div><div class="t" style="left:1119.75px;width:138.75px;text-align:center;top:391.0px;font-size:16.6px;color:#5a5a5a"><span class="sc" style="transform:scaleX(0.925)">27/05/2022 19:20</span></div><div class="t" style="left:1510.7px;width:83.89999999999986px;text-align:center;top:391.0px;font-size:16.6px;color:#5a5a5a"><span class="sc" style="transform:scaleX(0.925)">Positivo</span></div><div class="t" style="left:353.75px;top:417.75px;font-size:16.6px;color:#5a5a5a"><span class="sl" style="transform:scaleX(0.925)">Infeção pelo Cor</span></div><div class="t" style="left:480px;top:417.75px;font-size:16.6px;color:#5a5a5a"><span class="sl" style="transform:scaleX(0.925)">Teste rápido para</span></div><div class="t" style="left:606.25px;top:417.75px;font-size:16.6px;color:#5a5a5a"><span class="sl" style="transform:scaleX(0.925)">Imunocromatogr</span></div><div class="t" style="left:732.5px;top:417.75px;font-size:16.6px;color:#5a5a5a"><span class="sl" style="transform:scaleX(0.925)">Vírus SARS-CoV</span></div><div class="t" style="left:858.75px;top:417.75px;font-size:16.6px;color:#5a5a5a"><span class="sl" style="transform:scaleX(0.925)">Exsudado nasofa</span></div><div class="t" style="left:1262.5px;top:417.75px;font-size:16.6px;color:#5a5a5a"><span class="sl" style="transform:scaleX(0.925)">Healgen Scientifi</span></div><div class="t" style="left:1388.75px;top:417.75px;font-size:16.6px;color:#5a5a5a"><span class="sl" style="transform:scaleX(0.925)">Teste Rápido Pe</span></div><div class="t" style="left:981px;width:138.75px;text-align:center;top:419.75px;font-size:16.6px;color:#5a5a5a"><span class="sc" style="transform:scaleX(0.925)">28/05/2022 10:10</span></div><div class="t" style="left:1119.75px;width:138.75px;text-align:center;top:419.75px;font-size:16.6px;color:#5a5a5a"><span class="sc" style="transform:scaleX(0.925)">28/05/2022 10:27</span></div><div class="t" style="left:1510.7px;width:83.89999999999986px;text-align:center;top:419.75px;font-size:16.6px;color:#5a5a5a"><span class="sc" style="transform:scaleX(0.925)">Positivo</span></div><div class="t" style="left:353.75px;top:446.5px;font-size:16.6px;color:#5a5a5a"><span class="sl" style="transform:scaleX(0.925)">Infeção pelo Cor</span></div><div class="t" style="left:480px;top:446.5px;font-size:16.6px;color:#5a5a5a"><span class="sl" style="transform:scaleX(0.925)">Teste rápido para</span></div><div class="t" style="left:606.25px;top:446.5px;font-size:16.6px;color:#5a5a5a"><span class="sl" style="transform:scaleX(0.925)">Imunocromatogr</span></div><div class="t" style="left:732.5px;top:446.5px;font-size:16.6px;color:#5a5a5a"><span class="sl" style="transform:scaleX(0.925)">Vírus SARS-CoV</span></div><div class="t" style="left:858.75px;top:446.5px;font-size:16.6px;color:#5a5a5a"><span class="sl" style="transform:scaleX(0.925)">Exsudado nasofa</span></div><div class="t" style="left:1262.5px;top:446.5px;font-size:16.6px;color:#5a5a5a"><span class="sl" style="transform:scaleX(0.925)">Healgen Scientifi</span></div><div class="t" style="left:1388.75px;top:446.5px;font-size:16.6px;color:#5a5a5a"><span class="sl" style="transform:scaleX(0.925)">Teste Rápido Pe</span></div><div class="t" style="left:981px;width:138.75px;text-align:center;top:448.5px;font-size:16.6px;color:#5a5a5a"><span class="sc" style="transform:scaleX(0.925)">28/05/2022 10:10</span></div><div class="t" style="left:1119.75px;width:138.75px;text-align:center;top:448.5px;font-size:16.6px;color:#5a5a5a"><span class="sc" style="transform:scaleX(0.925)">28/05/2022 10:30</span></div><div class="t" style="left:1510.7px;width:83.89999999999986px;text-align:center;top:448.5px;font-size:16.6px;color:#5a5a5a"><span class="sc" style="transform:scaleX(0.925)">Positivo</span></div><div class="t" style="left:353.75px;top:475.25px;font-size:16.6px;color:#5a5a5a"><span class="sl" style="transform:scaleX(0.925)">Infeção pelo Cor</span></div><div class="t" style="left:480px;top:475.25px;font-size:16.6px;color:#5a5a5a"><span class="sl" style="transform:scaleX(0.925)">Teste rápido para</span></div><div class="t" style="left:606.25px;top:475.25px;font-size:16.6px;color:#5a5a5a"><span class="sl" style="transform:scaleX(0.925)">Imunocromatogr</span></div><div class="t" style="left:732.5px;top:475.25px;font-size:16.6px;color:#5a5a5a"><span class="sl" style="transform:scaleX(0.925)">Vírus SARS-CoV</span></div><div class="t" style="left:858.75px;top:475.25px;font-size:16.6px;color:#5a5a5a"><span class="sl" style="transform:scaleX(0.925)">Exsudado nasofa</span></div><div class="t" style="left:1262.5px;top:475.25px;font-size:16.6px;color:#5a5a5a"><span class="sl" style="transform:scaleX(0.925)">Healgen Scientifi</span></div><div class="t" style="left:1388.75px;top:475.25px;font-size:16.6px;color:#5a5a5a"><span class="sl" style="transform:scaleX(0.925)">Teste Rápido Pe</span></div><div class="t" style="left:981px;width:138.75px;text-align:center;top:477.25px;font-size:16.6px;color:#5a5a5a"><span class="sc" style="transform:scaleX(0.925)">28/05/2022 10:25</span></div><div class="t" style="left:1119.75px;width:138.75px;text-align:center;top:477.25px;font-size:16.6px;color:#5a5a5a"><span class="sc" style="transform:scaleX(0.925)">28/05/2022 10:46</span></div><div class="t" style="left:1510.7px;width:83.89999999999986px;text-align:center;top:477.25px;font-size:16.6px;color:#5a5a5a"><span class="sc" style="transform:scaleX(0.925)">Positivo</span></div><div class="t" style="left:353.75px;top:504.0px;font-size:16.6px;color:#5a5a5a"><span class="sl" style="transform:scaleX(0.925)">Infeção pelo Cor</span></div><div class="t" style="left:480px;top:504.0px;font-size:16.6px;color:#5a5a5a"><span class="sl" style="transform:scaleX(0.925)">Teste rápido para</span></div><div class="t" style="left:606.25px;top:504.0px;font-size:16.6px;color:#5a5a5a"><span class="sl" style="transform:scaleX(0.925)">Imunocromatogr</span></div><div class="t" style="left:732.5px;top:504.0px;font-size:16.6px;color:#5a5a5a"><span class="sl" style="transform:scaleX(0.925)">Vírus SARS-CoV</span></div><div class="t" style="left:858.75px;top:504.0px;font-size:16.6px;color:#5a5a5a"><span class="sl" style="transform:scaleX(0.925)">Exsudado nasofa</span></div><div class="t" style="left:1262.5px;top:504.0px;font-size:16.6px;color:#5a5a5a"><span class="sl" style="transform:scaleX(0.925)">Healgen Scientifi</span></div><div class="t" style="left:1388.75px;top:504.0px;font-size:16.6px;color:#5a5a5a"><span class="sl" style="transform:scaleX(0.925)">Teste Rápido Pe</span></div><div class="t" style="left:981px;width:138.75px;text-align:center;top:506.0px;font-size:16.6px;color:#5a5a5a"><span class="sc" style="transform:scaleX(0.925)">28/05/2022 12:50</span></div><div class="t" style="left:1119.75px;width:138.75px;text-align:center;top:506.0px;font-size:16.6px;color:#5a5a5a"><span class="sc" style="transform:scaleX(0.925)">28/05/2022 16:36</span></div><div class="t" style="left:1510.7px;width:83.89999999999986px;text-align:center;top:506.0px;font-size:16.6px;color:#5a5a5a"><span class="sc" style="transform:scaleX(0.925)">Positivo</span></div><div class="t" style="left:353.75px;top:532.75px;font-size:16.6px;color:#5a5a5a"><span class="sl" style="transform:scaleX(0.925)">Infeção pelo Cor</span></div><div class="t" style="left:480px;top:532.75px;font-size:16.6px;color:#5a5a5a"><span class="sl" style="transform:scaleX(0.925)">Teste rápido para</span></div><div class="t" style="left:606.25px;top:532.75px;font-size:16.6px;color:#5a5a5a"><span class="sl" style="transform:scaleX(0.925)">Imunocromatogr</span></div><div class="t" style="left:732.5px;top:532.75px;font-size:16.6px;color:#5a5a5a"><span class="sl" style="transform:scaleX(0.925)">Vírus SARS-CoV</span></div><div class="t" style="left:858.75px;top:532.75px;font-size:16.6px;color:#5a5a5a"><span class="sl" style="transform:scaleX(0.925)">Exsudado nasofa</span></div><div class="t" style="left:1262.5px;top:532.75px;font-size:16.6px;color:#5a5a5a"><span class="sl" style="transform:scaleX(0.925)">Healgen Scientifi</span></div><div class="t" style="left:1388.75px;top:532.75px;font-size:16.6px;color:#5a5a5a"><span class="sl" style="transform:scaleX(0.925)">Teste Rápido Pe</span></div><div class="t" style="left:981px;width:138.75px;text-align:center;top:534.75px;font-size:16.6px;color:#5a5a5a"><span class="sc" style="transform:scaleX(0.925)">28/05/2022 12:55</span></div><div class="t" style="left:1119.75px;width:138.75px;text-align:center;top:534.75px;font-size:16.6px;color:#5a5a5a"><span class="sc" style="transform:scaleX(0.925)">28/05/2022 16:37</span></div><div class="t" style="left:1510.7px;width:83.89999999999986px;text-align:center;top:534.75px;font-size:16.6px;color:#5a5a5a"><span class="sc" style="transform:scaleX(0.925)">Positivo</span></div><div class="t" style="left:353.75px;top:561.5px;font-size:16.6px;color:#5a5a5a"><span class="sl" style="transform:scaleX(0.925)">Infeção pelo Cor</span></div><div class="t" style="left:480px;top:561.5px;font-size:16.6px;color:#5a5a5a"><span class="sl" style="transform:scaleX(0.925)">Teste rápido para</span></div><div class="t" style="left:606.25px;top:561.5px;font-size:16.6px;color:#5a5a5a"><span class="sl" style="transform:scaleX(0.925)">Imunocromatogr</span></div><div class="t" style="left:732.5px;top:561.5px;font-size:16.6px;color:#5a5a5a"><span class="sl" style="transform:scaleX(0.925)">Vírus SARS-CoV</span></div><div class="t" style="left:858.75px;top:561.5px;font-size:16.6px;color:#5a5a5a"><span class="sl" style="transform:scaleX(0.925)">Exsudado nasofa</span></div><div class="t" style="left:1262.5px;top:561.5px;font-size:16.6px;color:#5a5a5a"><span class="sl" style="transform:scaleX(0.925)">Healgen Scientifi</span></div><div class="t" style="left:1388.75px;top:561.5px;font-size:16.6px;color:#5a5a5a"><span class="sl" style="transform:scaleX(0.925)">Teste Rápido Pe</span></div><div class="t" style="left:981px;width:138.75px;text-align:center;top:563.5px;font-size:16.6px;color:#5a5a5a"><span class="sc" style="transform:scaleX(0.925)">28/05/2022 13:00</span></div><div class="t" style="left:1119.75px;width:138.75px;text-align:center;top:563.5px;font-size:16.6px;color:#5a5a5a"><span class="sc" style="transform:scaleX(0.925)">28/05/2022 13:00</span></div><div class="t" style="left:1510.7px;width:83.89999999999986px;text-align:center;top:563.5px;font-size:16.6px;color:#5a5a5a"><span class="sc" style="transform:scaleX(0.925)">Positivo</span></div><div class="t" style="left:353.75px;top:590.25px;font-size:16.6px;color:#5a5a5a"><span class="sl" style="transform:scaleX(0.925)">Infeção pelo Cor</span></div><div class="t" style="left:480px;top:590.25px;font-size:16.6px;color:#5a5a5a"><span class="sl" style="transform:scaleX(0.925)">Teste rápido para</span></div><div class="t" style="left:606.25px;top:590.25px;font-size:16.6px;color:#5a5a5a"><span class="sl" style="transform:scaleX(0.925)">Imunocromatogr</span></div><div class="t" style="left:732.5px;top:590.25px;font-size:16.6px;color:#5a5a5a"><span class="sl" style="transform:scaleX(0.925)">Vírus SARS-CoV</span></div><div class="t" style="left:858.75px;top:590.25px;font-size:16.6px;color:#5a5a5a"><span class="sl" style="transform:scaleX(0.925)">Exsudado nasofa</span></div><div class="t" style="left:1262.5px;top:590.25px;font-size:16.6px;color:#5a5a5a"><span class="sl" style="transform:scaleX(0.925)">Healgen Scientifi</span></div><div class="t" style="left:1388.75px;top:590.25px;font-size:16.6px;color:#5a5a5a"><span class="sl" style="transform:scaleX(0.925)">Teste Rápido Pe</span></div><div class="t" style="left:981px;width:138.75px;text-align:center;top:592.25px;font-size:16.6px;color:#5a5a5a"><span class="sc" style="transform:scaleX(0.925)">29/05/2022 18:45</span></div><div class="t" style="left:1119.75px;width:138.75px;text-align:center;top:592.25px;font-size:16.6px;color:#5a5a5a"><span class="sc" style="transform:scaleX(0.925)">29/05/2022 19:00</span></div><div class="t" style="left:1510.7px;width:83.89999999999986px;text-align:center;top:592.25px;font-size:16.6px;color:#5a5a5a"><span class="sc" style="transform:scaleX(0.925)">Positivo</span></div><div class="t" style="left:353.75px;top:619.0px;font-size:16.6px;color:#5a5a5a"><span class="sl" style="transform:scaleX(0.925)">Infeção pelo Cor</span></div><div class="t" style="left:480px;top:619.0px;font-size:16.6px;color:#5a5a5a"><span class="sl" style="transform:scaleX(0.925)">Teste rápido para</span></div><div class="t" style="left:606.25px;top:619.0px;font-size:16.6px;color:#5a5a5a"><span class="sl" style="transform:scaleX(0.925)">Imunocromatogr</span></div><div class="t" style="left:732.5px;top:619.0px;font-size:16.6px;color:#5a5a5a"><span class="sl" style="transform:scaleX(0.925)">Vírus SARS-CoV</span></div><div class="t" style="left:858.75px;top:619.0px;font-size:16.6px;color:#5a5a5a"><span class="sl" style="transform:scaleX(0.925)">Exsudado nasofa</span></div><div class="t" style="left:1262.5px;top:619.0px;font-size:16.6px;color:#5a5a5a"><span class="sl" style="transform:scaleX(0.925)">Healgen Scientifi</span></div><div class="t" style="left:1388.75px;top:619.0px;font-size:16.6px;color:#5a5a5a"><span class="sl" style="transform:scaleX(0.925)">Teste Rápido Pe</span></div><div class="t" style="left:981px;width:138.75px;text-align:center;top:621.0px;font-size:16.6px;color:#5a5a5a"><span class="sc" style="transform:scaleX(0.925)">30/05/2022 10:03</span></div><div class="t" style="left:1119.75px;width:138.75px;text-align:center;top:621.0px;font-size:16.6px;color:#5a5a5a"><span class="sc" style="transform:scaleX(0.925)">30/05/2022 10:18</span></div><div class="t" style="left:1510.7px;width:83.89999999999986px;text-align:center;top:621.0px;font-size:16.6px;color:#5a5a5a"><span class="sc" style="transform:scaleX(0.925)">Negativo</span></div><div class="t" style="left:353.75px;top:647.75px;font-size:16.6px;color:#5a5a5a"><span class="sl" style="transform:scaleX(0.925)">Infeção pelo Cor</span></div><div class="t" style="left:480px;top:647.75px;font-size:16.6px;color:#5a5a5a"><span class="sl" style="transform:scaleX(0.925)">Teste rápido para</span></div><div class="t" style="left:606.25px;top:647.75px;font-size:16.6px;color:#5a5a5a"><span class="sl" style="transform:scaleX(0.925)">Imunocromatogr</span></div><div class="t" style="left:732.5px;top:647.75px;font-size:16.6px;color:#5a5a5a"><span class="sl" style="transform:scaleX(0.925)">Vírus SARS-CoV</span></div><div class="t" style="left:858.75px;top:647.75px;font-size:16.6px;color:#5a5a5a"><span class="sl" style="transform:scaleX(0.925)">Exsudado nasofa</span></div><div class="t" style="left:1262.5px;top:647.75px;font-size:16.6px;color:#5a5a5a"><span class="sl" style="transform:scaleX(0.925)">Healgen Scientifi</span></div><div class="t" style="left:1388.75px;top:647.75px;font-size:16.6px;color:#5a5a5a"><span class="sl" style="transform:scaleX(0.925)">Teste Rápido Pe</span></div><div class="t" style="left:981px;width:138.75px;text-align:center;top:649.75px;font-size:16.6px;color:#5a5a5a"><span class="sc" style="transform:scaleX(0.925)">30/05/2022 12:10</span></div><div class="t" style="left:1119.75px;width:138.75px;text-align:center;top:649.75px;font-size:16.6px;color:#5a5a5a"><span class="sc" style="transform:scaleX(0.925)">30/05/2022 12:25</span></div><div class="t" style="left:1510.7px;width:83.89999999999986px;text-align:center;top:649.75px;font-size:16.6px;color:#5a5a5a"><span class="sc" style="transform:scaleX(0.925)">Positivo</span></div><div class="t" style="left:353.75px;top:676.5px;font-size:16.6px;color:#5a5a5a"><span class="sl" style="transform:scaleX(0.925)">Infeção pelo Cor</span></div><div class="t" style="left:480px;top:676.5px;font-size:16.6px;color:#5a5a5a"><span class="sl" style="transform:scaleX(0.925)">Teste rápido para</span></div><div class="t" style="left:606.25px;top:676.5px;font-size:16.6px;color:#5a5a5a"><span class="sl" style="transform:scaleX(0.925)">Imunocromatogr</span></div><div class="t" style="left:732.5px;top:676.5px;font-size:16.6px;color:#5a5a5a"><span class="sl" style="transform:scaleX(0.925)">Vírus SARS-CoV</span></div><div class="t" style="left:858.75px;top:676.5px;font-size:16.6px;color:#5a5a5a"><span class="sl" style="transform:scaleX(0.925)">Exsudado nasofa</span></div><div class="t" style="left:1262.5px;top:676.5px;font-size:16.6px;color:#5a5a5a"><span class="sl" style="transform:scaleX(0.925)">Healgen Scientifi</span></div><div class="t" style="left:1388.75px;top:676.5px;font-size:16.6px;color:#5a5a5a"><span class="sl" style="transform:scaleX(0.925)">Teste Rápido Pe</span></div><div class="t" style="left:981px;width:138.75px;text-align:center;top:678.5px;font-size:16.6px;color:#5a5a5a"><span class="sc" style="transform:scaleX(0.925)">30/05/2022 12:16</span></div><div class="t" style="left:1119.75px;width:138.75px;text-align:center;top:678.5px;font-size:16.6px;color:#5a5a5a"><span class="sc" style="transform:scaleX(0.925)">30/05/2022 12:31</span></div><div class="t" style="left:1510.7px;width:83.89999999999986px;text-align:center;top:678.5px;font-size:16.6px;color:#5a5a5a"><span class="sc" style="transform:scaleX(0.925)">Positivo</span></div><div class="t" style="left:353.75px;top:705.25px;font-size:16.6px;color:#5a5a5a"><span class="sl" style="transform:scaleX(0.925)">Infeção pelo Cor</span></div><div class="t" style="left:480px;top:705.25px;font-size:16.6px;color:#5a5a5a"><span class="sl" style="transform:scaleX(0.925)">Teste rápido para</span></div><div class="t" style="left:606.25px;top:705.25px;font-size:16.6px;color:#5a5a5a"><span class="sl" style="transform:scaleX(0.925)">Imunocromatogr</span></div><div class="t" style="left:732.5px;top:705.25px;font-size:16.6px;color:#5a5a5a"><span class="sl" style="transform:scaleX(0.925)">Vírus SARS-CoV</span></div><div class="t" style="left:858.75px;top:705.25px;font-size:16.6px;color:#5a5a5a"><span class="sl" style="transform:scaleX(0.925)">Exsudado nasofa</span></div><div class="t" style="left:1262.5px;top:705.25px;font-size:16.6px;color:#5a5a5a"><span class="sl" style="transform:scaleX(0.925)">Healgen Scientifi</span></div><div class="t" style="left:1388.75px;top:705.25px;font-size:16.6px;color:#5a5a5a"><span class="sl" style="transform:scaleX(0.925)">Teste Rápido Pe</span></div><div class="t" style="left:981px;width:138.75px;text-align:center;top:707.25px;font-size:16.6px;color:#5a5a5a"><span class="sc" style="transform:scaleX(0.925)">30/05/2022 15:31</span></div><div class="t" style="left:1119.75px;width:138.75px;text-align:center;top:707.25px;font-size:16.6px;color:#5a5a5a"><span class="sc" style="transform:scaleX(0.925)">30/05/2022 15:46</span></div><div class="t" style="left:1510.7px;width:83.89999999999986px;text-align:center;top:707.25px;font-size:16.6px;color:#5a5a5a"><span class="sc" style="transform:scaleX(0.925)">Negativo</span></div><div class="t" style="left:353.75px;top:734.0px;font-size:16.6px;color:#5a5a5a"><span class="sl" style="transform:scaleX(0.925)">Infeção pelo Cor</span></div><div class="t" style="left:480px;top:734.0px;font-size:16.6px;color:#5a5a5a"><span class="sl" style="transform:scaleX(0.925)">Teste rápido para</span></div><div class="t" style="left:606.25px;top:734.0px;font-size:16.6px;color:#5a5a5a"><span class="sl" style="transform:scaleX(0.925)">Imunocromatogr</span></div><div class="t" style="left:732.5px;top:734.0px;font-size:16.6px;color:#5a5a5a"><span class="sl" style="transform:scaleX(0.925)">Vírus SARS-CoV</span></div><div class="t" style="left:858.75px;top:734.0px;font-size:16.6px;color:#5a5a5a"><span class="sl" style="transform:scaleX(0.925)">Exsudado nasofa</span></div><div class="t" style="left:1262.5px;top:734.0px;font-size:16.6px;color:#5a5a5a"><span class="sl" style="transform:scaleX(0.925)">Healgen Scientifi</span></div><div class="t" style="left:1388.75px;top:734.0px;font-size:16.6px;color:#5a5a5a"><span class="sl" style="transform:scaleX(0.925)">Teste Rápido Pe</span></div><div class="t" style="left:981px;width:138.75px;text-align:center;top:736.0px;font-size:16.6px;color:#5a5a5a"><span class="sc" style="transform:scaleX(0.925)">30/05/2022 15:38</span></div><div class="t" style="left:1119.75px;width:138.75px;text-align:center;top:736.0px;font-size:16.6px;color:#5a5a5a"><span class="sc" style="transform:scaleX(0.925)">30/05/2022 15:53</span></div><div class="t" style="left:1510.7px;width:83.89999999999986px;text-align:center;top:736.0px;font-size:16.6px;color:#5a5a5a"><span class="sc" style="transform:scaleX(0.925)">Negativo</span></div><div class="t" style="left:353.75px;top:762.75px;font-size:16.6px;color:#5a5a5a"><span class="sl" style="transform:scaleX(0.925)">Infeção pelo Cor</span></div><div class="t" style="left:480px;top:762.75px;font-size:16.6px;color:#5a5a5a"><span class="sl" style="transform:scaleX(0.925)">Teste rápido para</span></div><div class="t" style="left:606.25px;top:762.75px;font-size:16.6px;color:#5a5a5a"><span class="sl" style="transform:scaleX(0.925)">Imunocromatogr</span></div><div class="t" style="left:732.5px;top:762.75px;font-size:16.6px;color:#5a5a5a"><span class="sl" style="transform:scaleX(0.925)">Vírus SARS-CoV</span></div><div class="t" style="left:858.75px;top:762.75px;font-size:16.6px;color:#5a5a5a"><span class="sl" style="transform:scaleX(0.925)">Exsudado nasofa</span></div><div class="t" style="left:1262.5px;top:762.75px;font-size:16.6px;color:#5a5a5a"><span class="sl" style="transform:scaleX(0.925)">Healgen Scientifi</span></div><div class="t" style="left:1388.75px;top:762.75px;font-size:16.6px;color:#5a5a5a"><span class="sl" style="transform:scaleX(0.925)">Teste Rápido Pe</span></div><div class="t" style="left:981px;width:138.75px;text-align:center;top:764.75px;font-size:16.6px;color:#5a5a5a"><span class="sc" style="transform:scaleX(0.925)">30/05/2022 15:00</span></div><div class="t" style="left:1119.75px;width:138.75px;text-align:center;top:764.75px;font-size:16.6px;color:#5a5a5a"><span class="sc" style="transform:scaleX(0.925)">30/05/2022 15:15</span></div><div class="t" style="left:1510.7px;width:83.89999999999986px;text-align:center;top:764.75px;font-size:16.6px;color:#5a5a5a"><span class="sc" style="transform:scaleX(0.925)">Positivo</span></div><div class="t" style="left:353.75px;top:791.5px;font-size:16.6px;color:#5a5a5a"><span class="sl" style="transform:scaleX(0.925)">Infeção pelo Cor</span></div><div class="t" style="left:480px;top:791.5px;font-size:16.6px;color:#5a5a5a"><span class="sl" style="transform:scaleX(0.925)">Teste rápido para</span></div><div class="t" style="left:606.25px;top:791.5px;font-size:16.6px;color:#5a5a5a"><span class="sl" style="transform:scaleX(0.925)">Imunocromatogr</span></div><div class="t" style="left:732.5px;top:791.5px;font-size:16.6px;color:#5a5a5a"><span class="sl" style="transform:scaleX(0.925)">Vírus SARS-CoV</span></div><div class="t" style="left:858.75px;top:791.5px;font-size:16.6px;color:#5a5a5a"><span class="sl" style="transform:scaleX(0.925)">Exsudado nasofa</span></div><div class="t" style="left:1262.5px;top:791.5px;font-size:16.6px;color:#5a5a5a"><span class="sl" style="transform:scaleX(0.925)">Healgen Scientifi</span></div><div class="t" style="left:1388.75px;top:791.5px;font-size:16.6px;color:#5a5a5a"><span class="sl" style="transform:scaleX(0.925)">Teste Rápido Pe</span></div><div class="t" style="left:981px;width:138.75px;text-align:center;top:793.5px;font-size:16.6px;color:#5a5a5a"><span class="sc" style="transform:scaleX(0.925)">30/05/2022 15:40</span></div><div class="t" style="left:1119.75px;width:138.75px;text-align:center;top:793.5px;font-size:16.6px;color:#5a5a5a"><span class="sc" style="transform:scaleX(0.925)">30/05/2022 15:55</span></div><div class="t" style="left:1510.7px;width:83.89999999999986px;text-align:center;top:793.5px;font-size:16.6px;color:#5a5a5a"><span class="sc" style="transform:scaleX(0.925)">Negativo</span></div><svg width="0" height="0" style="position:absolute"><defs><filter id="nz" x="0" y="0" width="100%" height="100%" color-interpolation-filters="sRGB"><feTurbulence type="fractalNoise" baseFrequency="0.22" numOctaves="3" seed="7"/><feColorMatrix type="matrix" values="0 0 0 0 0  0 0 0 0 0.47  0 0 0 0 0.84  5 0 0 0 -2.4"/></filter></defs></svg><div class="a" style="left:243px;top:69.75px;width:90px;height:28.75px;background:#ffffff"></div><svg class="a" style="left:243px;top:69.75px" width="90" height="28"><rect width="90" height="28" fill="#000" filter="url(#nz)"/></svg><div class="a" style="left:1626px;top:69.75px;width:137px;height:28.75px;background:#ffffff"></div><svg class="a" style="left:1626px;top:69.75px" width="137" height="28"><rect width="137" height="28" fill="#000" filter="url(#nz)"/></svg><div class="a" style="left:243px;top:98.5px;width:90px;height:28.75px;background:#ffffff"></div><div class="t" style="left:243px;width:90px;text-align:center;top:101.5px;font-size:16.6px;color:#f4f4f4"><span class="sc" style="transform:scaleX(0.925)">331232862</span></div><div class="a" style="left:1626px;top:98.5px;width:137px;height:28.75px;background:#ffffff"></div><div class="t" style="left:1626px;width:137px;text-align:center;top:101.5px;font-size:16.6px;color:#f4f4f4"><span class="sc" style="transform:scaleX(0.925)">Pedro Franca</span></div><div class="a" style="left:243px;top:127.25px;width:90px;height:28.75px;background:#fffff4"></div><div class="t" style="left:243px;width:90px;text-align:center;top:130.25px;font-size:16.6px;color:#f4f4f4"><span class="sc" style="transform:scaleX(0.925)">264227771</span></div><div class="a" style="left:1626px;top:127.25px;width:137px;height:28.75px;background:#fffff4"></div><div class="t" style="left:1626px;width:137px;text-align:center;top:130.25px;font-size:16.6px;color:#f4f4f4"><span class="sc" style="transform:scaleX(0.925)">Pedro Franca</span></div><div class="a" style="left:243px;top:156.0px;width:90px;height:28.75px;background:#ffffff"></div><div class="t" style="left:243px;width:90px;text-align:center;top:159.0px;font-size:16.6px;color:#f4f4f4"><span class="sc" style="transform:scaleX(0.925)">270915589</span></div><div class="a" style="left:1626px;top:156.0px;width:137px;height:28.75px;background:#ffffff"></div><div class="t" style="left:1626px;width:137px;text-align:center;top:159.0px;font-size:16.6px;color:#f4f4f4"><span class="sc" style="transform:scaleX(0.925)">Pedro Franca</span></div><div class="a" style="left:243px;top:184.75px;width:90px;height:28.75px;background:#fffff4"></div><div class="t" style="left:243px;width:90px;text-align:center;top:187.75px;font-size:16.6px;color:#f4f4f4"><span class="sc" style="transform:scaleX(0.925)">331227503</span></div><div class="a" style="left:1626px;top:184.75px;width:137px;height:28.75px;background:#fffff4"></div><div class="t" style="left:1626px;width:137px;text-align:center;top:187.75px;font-size:16.6px;color:#f4f4f4"><span class="sc" style="transform:scaleX(0.925)">Pedro Franca</span></div><div class="a" style="left:243px;top:213.5px;width:90px;height:28.75px;background:#ffffff"></div><div class="t" style="left:243px;width:90px;text-align:center;top:216.5px;font-size:16.6px;color:#f4f4f4"><span class="sc" style="transform:scaleX(0.925)">264127723</span></div><div class="a" style="left:1626px;top:213.5px;width:137px;height:28.75px;background:#ffffff"></div><div class="t" style="left:1626px;width:137px;text-align:center;top:216.5px;font-size:16.6px;color:#f4f4f4"><span class="sc" style="transform:scaleX(0.925)">Pedro Franca</span></div><div class="a" style="left:243px;top:242.25px;width:90px;height:28.75px;background:#fffff4"></div><div class="t" style="left:243px;width:90px;text-align:center;top:245.25px;font-size:16.6px;color:#f4f4f4"><span class="sc" style="transform:scaleX(0.925)">270315817</span></div><div class="a" style="left:1626px;top:242.25px;width:137px;height:28.75px;background:#fffff4"></div><div class="t" style="left:1626px;width:137px;text-align:center;top:245.25px;font-size:16.6px;color:#f4f4f4"><span class="sc" style="transform:scaleX(0.925)">Pedro Franca</span></div><div class="a" style="left:243px;top:271.0px;width:90px;height:28.75px;background:#ffffff"></div><div class="t" style="left:243px;width:90px;text-align:center;top:274.0px;font-size:16.6px;color:#f4f4f4"><span class="sc" style="transform:scaleX(0.925)">270113656</span></div><div class="a" style="left:1626px;top:271.0px;width:137px;height:28.75px;background:#ffffff"></div><div class="t" style="left:1626px;width:137px;text-align:center;top:274.0px;font-size:16.6px;color:#f4f4f4"><span class="sc" style="transform:scaleX(0.925)">Pedro Franca</span></div><div class="a" style="left:243px;top:299.75px;width:90px;height:28.75px;background:#fffff4"></div><div class="t" style="left:243px;width:90px;text-align:center;top:302.75px;font-size:16.6px;color:#f4f4f4"><span class="sc" style="transform:scaleX(0.925)">230936837</span></div><div class="a" style="left:1626px;top:299.75px;width:137px;height:28.75px;background:#fffff4"></div><div class="t" style="left:1626px;width:137px;text-align:center;top:302.75px;font-size:16.6px;color:#f4f4f4"><span class="sc" style="transform:scaleX(0.925)">Pedro Franca</span></div><div class="a" style="left:243px;top:328.5px;width:90px;height:28.75px;background:#ffffff"></div><div class="t" style="left:243px;width:90px;text-align:center;top:331.5px;font-size:16.6px;color:#f4f4f4"><span class="sc" style="transform:scaleX(0.925)">224122152</span></div><div class="a" style="left:1626px;top:328.5px;width:137px;height:28.75px;background:#ffffff"></div><div class="t" style="left:1626px;width:137px;text-align:center;top:331.5px;font-size:16.6px;color:#f4f4f4"><span class="sc" style="transform:scaleX(0.925)">Pedro Franca</span></div><div class="a" style="left:243px;top:357.25px;width:90px;height:28.75px;background:#fffff4"></div><div class="t" style="left:243px;width:90px;text-align:center;top:360.25px;font-size:16.6px;color:#f4f4f4"><span class="sc" style="transform:scaleX(0.925)">333593463</span></div><div class="a" style="left:1626px;top:357.25px;width:137px;height:28.75px;background:#fffff4"></div><div class="t" style="left:1626px;width:137px;text-align:center;top:360.25px;font-size:16.6px;color:#f4f4f4"><span class="sc" style="transform:scaleX(0.925)">Pedro Franca</span></div><div class="a" style="left:243px;top:386.0px;width:90px;height:28.75px;background:#ffffff"></div><div class="t" style="left:243px;width:90px;text-align:center;top:389.0px;font-size:16.6px;color:#f4f4f4"><span class="sc" style="transform:scaleX(0.925)">229419332</span></div><div class="a" style="left:1626px;top:386.0px;width:137px;height:28.75px;background:#ffffff"></div><div class="t" style="left:1626px;width:137px;text-align:center;top:389.0px;font-size:16.6px;color:#f4f4f4"><span class="sc" style="transform:scaleX(0.925)">Pedro Franca</span></div><div class="a" style="left:243px;top:414.75px;width:90px;height:28.75px;background:#fffff4"></div><div class="t" style="left:243px;width:90px;text-align:center;top:417.75px;font-size:16.6px;color:#f4f4f4"><span class="sc" style="transform:scaleX(0.925)">331717747</span></div><div class="a" style="left:1626px;top:414.75px;width:137px;height:28.75px;background:#fffff4"></div><div class="t" style="left:1626px;width:137px;text-align:center;top:417.75px;font-size:16.6px;color:#f4f4f4"><span class="sc" style="transform:scaleX(0.925)">Pedro Franca</span></div><div class="a" style="left:243px;top:443.5px;width:90px;height:28.75px;background:#ffffff"></div><div class="t" style="left:243px;width:90px;text-align:center;top:446.5px;font-size:16.6px;color:#f4f4f4"><span class="sc" style="transform:scaleX(0.925)">279357911</span></div><div class="a" style="left:1626px;top:443.5px;width:137px;height:28.75px;background:#ffffff"></div><div class="t" style="left:1626px;width:137px;text-align:center;top:446.5px;font-size:16.6px;color:#f4f4f4"><span class="sc" style="transform:scaleX(0.925)">Pedro Franca</span></div><div class="a" style="left:243px;top:472.25px;width:90px;height:28.75px;background:#fffff4"></div><div class="t" style="left:243px;width:90px;text-align:center;top:475.25px;font-size:16.6px;color:#f4f4f4"><span class="sc" style="transform:scaleX(0.925)">272227323</span></div><div class="a" style="left:1626px;top:472.25px;width:137px;height:28.75px;background:#fffff4"></div><div class="t" style="left:1626px;width:137px;text-align:center;top:475.25px;font-size:16.6px;color:#f4f4f4"><span class="sc" style="transform:scaleX(0.925)">Pedro Franca</span></div><div class="a" style="left:243px;top:501.0px;width:90px;height:28.75px;background:#ffffff"></div><div class="t" style="left:243px;width:90px;text-align:center;top:504.0px;font-size:16.6px;color:#f4f4f4"><span class="sc" style="transform:scaleX(0.925)">261751326</span></div><div class="a" style="left:1626px;top:501.0px;width:137px;height:28.75px;background:#ffffff"></div><div class="t" style="left:1626px;width:137px;text-align:center;top:504.0px;font-size:16.6px;color:#f4f4f4"><span class="sc" style="transform:scaleX(0.925)">Pedro Franca</span></div><div class="a" style="left:243px;top:529.75px;width:90px;height:28.75px;background:#fffff4"></div><div class="t" style="left:243px;width:90px;text-align:center;top:532.75px;font-size:16.6px;color:#f4f4f4"><span class="sc" style="transform:scaleX(0.925)">270016447</span></div><div class="a" style="left:1626px;top:529.75px;width:137px;height:28.75px;background:#fffff4"></div><div class="t" style="left:1626px;width:137px;text-align:center;top:532.75px;font-size:16.6px;color:#f4f4f4"><span class="sc" style="transform:scaleX(0.925)">Pedro Franca</span></div><div class="a" style="left:243px;top:558.5px;width:90px;height:28.75px;background:#ffffff"></div><div class="t" style="left:243px;width:90px;text-align:center;top:561.5px;font-size:16.6px;color:#f4f4f4"><span class="sc" style="transform:scaleX(0.925)">331191913</span></div><div class="a" style="left:1626px;top:558.5px;width:137px;height:28.75px;background:#ffffff"></div><div class="t" style="left:1626px;width:137px;text-align:center;top:561.5px;font-size:16.6px;color:#f4f4f4"><span class="sc" style="transform:scaleX(0.925)">Pedro Franca</span></div><div class="a" style="left:243px;top:587.25px;width:90px;height:28.75px;background:#fffff4"></div><div class="t" style="left:243px;width:90px;text-align:center;top:590.25px;font-size:16.6px;color:#f4f4f4"><span class="sc" style="transform:scaleX(0.925)">305112211</span></div><div class="a" style="left:1626px;top:587.25px;width:137px;height:28.75px;background:#fffff4"></div><div class="t" style="left:1626px;width:137px;text-align:center;top:590.25px;font-size:16.6px;color:#f4f4f4"><span class="sc" style="transform:scaleX(0.925)">Pedro Franca</span></div><div class="a" style="left:243px;top:616.0px;width:90px;height:28.75px;background:#ffffff"></div><div class="t" style="left:243px;width:90px;text-align:center;top:619.0px;font-size:16.6px;color:#f4f4f4"><span class="sc" style="transform:scaleX(0.925)">272221367</span></div><div class="a" style="left:1626px;top:616.0px;width:137px;height:28.75px;background:#ffffff"></div><div class="t" style="left:1626px;width:137px;text-align:center;top:619.0px;font-size:16.6px;color:#f4f4f4"><span class="sc" style="transform:scaleX(0.925)">Pedro Franca</span></div><div class="a" style="left:243px;top:644.75px;width:90px;height:28.75px;background:#fffff4"></div><div class="t" style="left:243px;width:90px;text-align:center;top:647.75px;font-size:16.6px;color:#f4f4f4"><span class="sc" style="transform:scaleX(0.925)">336177627</span></div><div class="a" style="left:1626px;top:644.75px;width:137px;height:28.75px;background:#fffff4"></div><div class="t" style="left:1626px;width:137px;text-align:center;top:647.75px;font-size:16.6px;color:#f4f4f4"><span class="sc" style="transform:scaleX(0.925)">Pedro Franca</span></div><div class="a" style="left:243px;top:673.5px;width:90px;height:28.75px;background:#ffffff"></div><div class="t" style="left:243px;width:90px;text-align:center;top:676.5px;font-size:16.6px;color:#f4f4f4"><span class="sc" style="transform:scaleX(0.925)">270123133</span></div><div class="a" style="left:1626px;top:673.5px;width:137px;height:28.75px;background:#ffffff"></div><div class="t" style="left:1626px;width:137px;text-align:center;top:676.5px;font-size:16.6px;color:#f4f4f4"><span class="sc" style="transform:scaleX(0.925)">Pedro Franca</span></div><div class="a" style="left:243px;top:702.25px;width:90px;height:28.75px;background:#fffff4"></div><div class="t" style="left:243px;width:90px;text-align:center;top:705.25px;font-size:16.6px;color:#f4f4f4"><span class="sc" style="transform:scaleX(0.925)">230372774</span></div><div class="a" style="left:1626px;top:702.25px;width:137px;height:28.75px;background:#fffff4"></div><div class="t" style="left:1626px;width:137px;text-align:center;top:705.25px;font-size:16.6px;color:#f4f4f4"><span class="sc" style="transform:scaleX(0.925)">Pedro Franca</span></div><div class="a" style="left:243px;top:731.0px;width:90px;height:28.75px;background:#ffffff"></div><div class="t" style="left:243px;width:90px;text-align:center;top:734.0px;font-size:16.6px;color:#f4f4f4"><span class="sc" style="transform:scaleX(0.925)">272303311</span></div><div class="a" style="left:1626px;top:731.0px;width:137px;height:28.75px;background:#ffffff"></div><div class="t" style="left:1626px;width:137px;text-align:center;top:734.0px;font-size:16.6px;color:#f4f4f4"><span class="sc" style="transform:scaleX(0.925)">Pedro Franca</span></div><div class="a" style="left:243px;top:759.75px;width:90px;height:28.75px;background:#fffff4"></div><div class="t" style="left:243px;width:90px;text-align:center;top:762.75px;font-size:16.6px;color:#f4f4f4"><span class="sc" style="transform:scaleX(0.925)">337040024</span></div><div class="a" style="left:1626px;top:759.75px;width:137px;height:28.75px;background:#fffff4"></div><div class="t" style="left:1626px;width:137px;text-align:center;top:762.75px;font-size:16.6px;color:#f4f4f4"><span class="sc" style="transform:scaleX(0.925)">Pedro Franca</span></div><div class="a" style="left:243px;top:788.5px;width:90px;height:28.75px;background:#ffffff"></div><div class="t" style="left:243px;width:90px;text-align:center;top:791.5px;font-size:16.6px;color:#f4f4f4"><span class="sc" style="transform:scaleX(0.925)">233022102</span></div><div class="a" style="left:1626px;top:788.5px;width:137px;height:28.75px;background:#ffffff"></div><div class="t" style="left:1626px;width:137px;text-align:center;top:791.5px;font-size:16.6px;color:#f4f4f4"><span class="sc" style="transform:scaleX(0.925)">Pedro Franca</span></div></div><div class="a" style="left:1743px;top:267.25px;width:21px;height:28.25px;background:#fffcd6"></div><div class="a" style="left:1743px;top:324.75px;width:21px;height:28.25px;background:#fffcd6"></div><div class="a" style="left:1743px;top:382.25px;width:21px;height:28.25px;background:#fffcd6"></div><div class="a" style="left:1743px;top:439.75px;width:21px;height:28.25px;background:#fffcd6"></div><div class="a" style="left:1743px;top:497.25px;width:21px;height:28.25px;background:#fffcd6"></div><div class="a" style="left:1743px;top:554.75px;width:21px;height:28.25px;background:#fffcd6"></div><div class="a" style="left:1743px;top:612.25px;width:21px;height:28.25px;background:#fffcd6"></div><div class="a" style="left:1743px;top:669.75px;width:21px;height:28.25px;background:#fffcd6"></div><div class="a" style="left:1743px;top:727.25px;width:21px;height:28.25px;background:#fffcd6"></div><div class="a" style="left:1743px;top:784.75px;width:21px;height:28.25px;background:#fffcd6"></div><div class="a" style="left:1743px;top:842.25px;width:21px;height:28.25px;background:#fffcd6"></div><div class="a" style="left:1743px;top:899.75px;width:21px;height:28.25px;background:#fffcd6"></div><div class="a" style="left:244px;top:939px;width:90px;height:5px;background:#fdfdfd"></div><div class="a" style="left:1627px;top:939px;width:137px;height:1px;background:#fdfdfd"></div><div class="a" style="left:1902px;top:161px;width:3px;height:436px;background:#8a8a8a;border-radius:1.5px"></div><div class="a" style="left:1511px;top:946px;width:128px;height:64px;background:#3ca0cf"></div><div class="a" style="left:1511px;top:1010px;width:128px;height:5px;background:#116a80"></div><div class="a" style="left:1511px;top:962px;width:127px;text-align:center;font-size:15px;font-weight:bold;line-height:17px;color:#fff">Exportar para<br>CSV</div><div class="a" style="left:1646px;top:946px;width:128px;height:64px;background:#3ca0cf"></div><div class="a" style="left:1646px;top:1010px;width:128px;height:5px;background:#116a80"></div><div class="a" style="left:1646px;top:962px;width:127px;text-align:center;font-size:15px;font-weight:bold;line-height:17px;color:#fff">Imprimir<br>Relatório</div><div class="t" style="left:1701px;width:71px;text-align:right;top:948px;font-size:13.2px;color:#fff">[F10]</div><div class="a" style="left:1781px;top:946px;width:128px;height:64px;background:#db5849"></div><div class="a" style="left:1781px;top:1010px;width:128px;height:5px;background:#8b2a31"></div><div class="t" style="left:1781px;width:127px;text-align:center;top:971px;font-size:15px;font-weight:bold;color:#fff">Fechar</div><div class="t" style="left:1836px;width:71px;text-align:right;top:948px;font-size:13.2px;color:#fff">[Esc]</div></body></html>
